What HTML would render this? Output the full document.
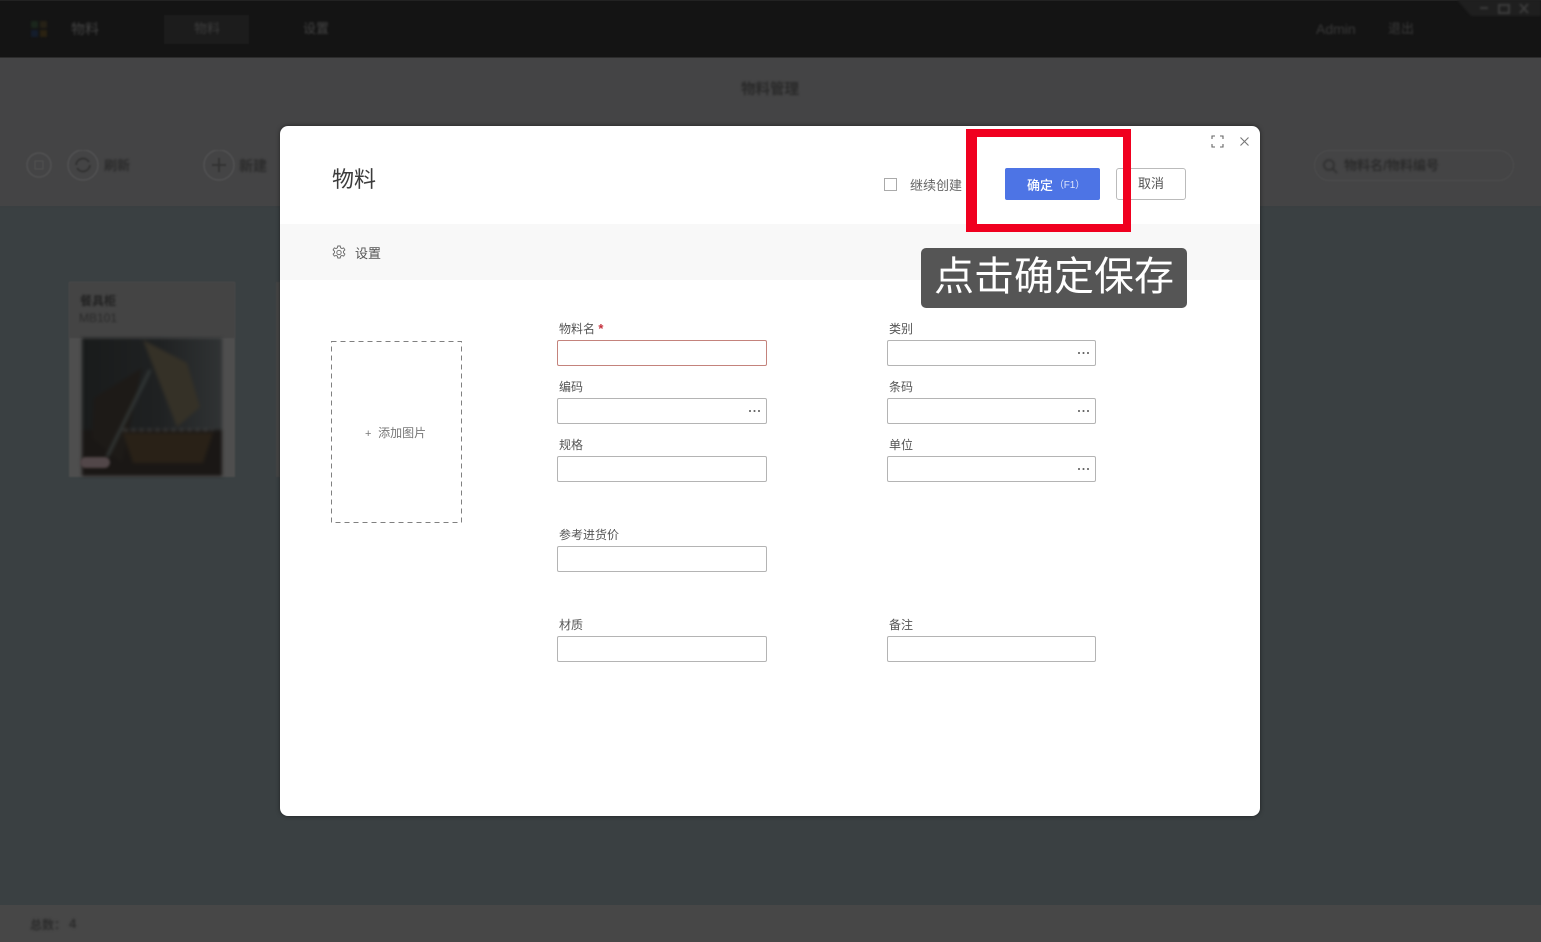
<!DOCTYPE html>
<html lang="zh"><head><meta charset="utf-8"><title>物料</title>
<style>
*{box-sizing:border-box;margin:0;padding:0}
html,body{width:1541px;height:942px;overflow:hidden;background:#3a4042;font-family:"Liberation Sans","Noto Sans CJK SC",sans-serif;color:#555}
.a{position:absolute;white-space:nowrap}
.b{filter:blur(1px)}
#bg{position:absolute;left:0;top:0;width:1541px;height:942px;overflow:hidden}
.l{font-size:12px;line-height:16px;color:#555;position:absolute;white-space:nowrap}
.i{position:absolute;width:210px;height:26px;border:1px solid #b4b4b4;border-radius:2px;background:#fff}
.d{position:absolute;right:6px;top:11px;width:11px;height:2px;background:radial-gradient(circle at 1px 1px,#666 1px,transparent 1.1px) 0 0/4.5px 2px repeat-x}
</style></head><body>
<div id="bg">
<div class="a" style="left:0;top:0;width:1541px;height:58px;background:#141414;border-bottom:1px solid #2c2c2c;border-top:1px solid #222"></div>
<div class="a" style="left:0;top:58px;width:1541px;height:150px;background:#444445"></div>
<div class="a" style="left:0;top:206px;width:1541px;height:2px;background:#3a3f41"></div>
<div class="a" style="left:0;top:905px;width:1541px;height:37px;background:#474747"></div>

<svg class="a b" style="left:30px;top:20px" width="19" height="19"><rect x="1" y="1" width="7" height="7" fill="#1a261c"/><rect x="10" y="1" width="7" height="7" fill="#262116"/><rect x="1" y="10" width="7" height="7" fill="#141d2c"/><rect x="10" y="10" width="7" height="7" fill="#2a2212"/></svg>
<div class="a b" style="left:71px;top:20px;font-size:14px;line-height:18px;color:#444">物料</div>
<div class="a" style="left:164px;top:15px;width:85px;height:29px;background:#1c1c1c;filter:blur(.6px)"></div>
<div class="a b" style="left:194px;top:20px;font-size:13px;line-height:18px;color:#3e3e3e">物料</div>
<div class="a b" style="left:303px;top:20px;font-size:13px;line-height:18px;color:#444">设置</div>
<div class="a b" style="left:1316px;top:20px;font-size:14px;line-height:18px;color:#3a3a3a">Admin</div>
<div class="a b" style="left:1388px;top:20px;font-size:13px;line-height:18px;color:#3a3a3a">退出</div>
<svg class="a b" style="left:1455px;top:0" width="86" height="18"><path d="M2 0 L16 16 H86 V0Z" fill="#1f1f1f"/><path d="M25 8H33M44 5H54V13H44ZM65 4L73 13M73 4L65 13" stroke="#3c3c3c" stroke-width="2" fill="none"/></svg>

<div class="a b" style="left:741px;top:81px;font-size:14.500px;line-height:18px;font-weight:bold;color:#2a2a2a">物料管理</div>

<svg class="a" style="left:26px;top:150px;filter:blur(.7px)" width="270" height="32" fill="none" stroke="#525253">
<circle cx="13" cy="15" r="12" stroke-width="1.500"/><rect x="9" y="11" width="8" height="8"/>
<circle cx="57" cy="15" r="15" stroke-width="1.500"/><path d="M50 15a7 7 0 0 1 13-3M64 15a7 7 0 0 1-13 3" stroke-width="2" stroke="#333"/>
<circle cx="193" cy="15" r="15" stroke-width="1.500"/><path d="M193 8v14M186 15h14" stroke-width="2" stroke="#333"/>
</svg>
<div class="a b" style="left:104px;top:157px;font-size:13px;line-height:18px;font-weight:bold;color:#2c2c2c">刷新</div>
<div class="a b" style="left:239px;top:157px;font-size:14px;line-height:18px;font-weight:bold;color:#2c2c2c">新建</div>
<div class="a" style="left:1314px;top:150px;width:200px;height:31px;border:1.500px solid #4d4d4e;border-radius:16px;filter:blur(.7px)"></div>
<svg class="a b" style="left:1322px;top:158px" width="16" height="16" fill="none" stroke="#2e2e2e" stroke-width="1.6"><circle cx="7" cy="7" r="5"/><path d="M11 11l4 4"/></svg>
<div class="a b" style="left:1344px;top:157px;font-size:13px;line-height:18px;font-weight:bold;color:#2c2c2c;letter-spacing:.05px">物料名/物料编号</div>

<div class="a" style="left:69px;top:282px;width:166px;height:195px;background:#4e4e4e;filter:blur(.8px)"></div>
<div class="a" style="left:69px;top:282px;width:166px;height:56px;background:#444;filter:blur(.8px)"></div>
<div class="a b" style="left:80px;top:294px;font-size:12px;line-height:15px;font-weight:bold;color:#222">餐具柜</div>
<div class="a b" style="left:79px;top:311px;font-size:12px;line-height:15px;color:#2a2a2a">MB101</div>
<svg class="a" style="left:82px;top:338px;filter:blur(1.8px)" width="140" height="138">
<defs><linearGradient id="g" x1="0" x2="1" y1="0" y2="0"><stop offset="0" stop-color="#191b1b"/><stop offset=".55" stop-color="#1f2122"/><stop offset="1" stop-color="#303334"/></linearGradient></defs>
<rect width="140" height="138" fill="url(#g)"/>
<rect y="92" width="140" height="46" fill="#1a1715"/>
<path d="M12 60L60 30 40 125 10 100Z" fill="#1d1a17"/>
<path d="M61 2L105 25 118 69 95 89Z" fill="#353127"/>
<path d="M41 95H131L121 125 51 125Z" fill="#292117"/>
<path d="M68 32L25 119" stroke="#373d3c" stroke-width="2.500"/>
<path d="M41 92H131" stroke="#505050" stroke-width="1.500" stroke-dasharray="5 3"/>
</svg>
<div class="a" style="left:80px;top:457px;width:30px;height:11px;border-radius:6px;background:#524749;filter:blur(1.200px)"></div>
<div class="a" style="left:276px;top:282px;width:4px;height:195px;background:#464646;filter:blur(.6px)"></div>

<div class="a b" style="left:30px;top:916px;font-size:12px;line-height:18px;color:#2c2c2c;font-weight:bold">总数：</div>
<div class="a b" style="left:69px;top:915px;font-size:13px;line-height:18px;color:#2c2c2c;font-weight:bold">4</div>
</div>

<div class="a" style="left:280px;top:126px;width:980px;height:690px;background:#fff;border-radius:8px;box-shadow:0 0 4px rgba(0,0,0,.5)">
<div class="a" style="left:0;top:98px;width:980px;height:56px;background:#f8f8f8"></div>
</div>

<div class="a" style="left:332px;top:166px;font-size:22px;line-height:28px;color:#3c3c3c">物料</div>
<svg class="a" style="left:1211px;top:135px" width="13" height="13" fill="none" stroke="#666" stroke-width="1.1"><path d="M1 4V1H4M9 1H12V4M12 9V12H9M4 12H1V9"/></svg>
<svg class="a" style="left:1239px;top:136px" width="11" height="11" fill="none" stroke="#777" stroke-width="1.1"><path d="M1.5 1.500L9.500 9.500M9.500 1.500L1.500 9.500"/></svg>

<div class="a" style="left:884px;top:178px;width:13px;height:13px;border:1px solid #aaa"></div>
<div class="a" style="left:910px;top:177px;font-size:13px;line-height:18px;color:#666">继续创建</div>
<div class="a" style="left:1005px;top:168px;width:95px;height:32px;background:#4d74e5;border-radius:2px"></div>
<div class="a" style="left:1027px;top:177px;font-size:13px;line-height:18px;color:#fff;font-weight:500">确定</div>
<div class="a" style="left:1054px;top:177px;font-size:10px;line-height:17px;color:#dfe6fb;letter-spacing:-.2px">（F1）</div>
<div class="a" style="left:1116px;top:168px;width:70px;height:32px;border:1px solid #bbb;border-radius:3px;background:#fff"></div>
<div class="a" style="left:1138px;top:175px;font-size:13px;line-height:18px;color:#555">取消</div>
<div class="a" style="left:966px;top:129px;width:165px;height:103px;border:8px solid #f0001f;border-left-width:11px;border-top-width:8px"></div>

<svg class="a" style="left:332px;top:245px" width="14" height="15" fill="none" stroke="#666" stroke-width=".9"><circle cx="7" cy="7.500" r="2.200"/><path d="M5.800 1h2.400l.4 1.800 1.300.7 1.800-.6 1.200 2-1.400 1.300v1.600l1.400 1.300-1.200 2-1.800-.6-1.300.7-.4 1.800H5.800l-.4-1.800-1.300-.7-1.800.6-1.200-2 1.400-1.300V6.200L1.100 4.900l1.200-2 1.800.6 1.300-.7z"/></svg>
<div class="a" style="left:355px;top:245px;font-size:13px;line-height:18px;color:#555">设置</div>

<div class="a" style="left:921px;top:248px;width:266px;height:60px;background:#555;border-radius:5px"></div>
<div class="a" style="left:934px;top:252px;font-size:40px;line-height:50px;color:#fff">点击确定保存</div>

<svg class="a" style="left:331px;top:341px" width="131" height="182" fill="none"><rect x=".5" y=".5" width="130" height="181" stroke="#808080" stroke-dasharray="5 4"/></svg>
<div class="a" style="left:365px;top:425px;font-size:12px;line-height:16px;color:#777"><span style="font-size:11px">+</span> &nbsp;添加图片</div>

<div class="l" style="left:559px;top:321px">物料名 <span style="color:#c4303c;font-weight:bold;font-size:13px">*</span></div>
<div class="i" style="left:557px;top:340px;border-color:#c4837c"></div>
<div class="l" style="left:559px;top:379px">编码</div>
<div class="i" style="left:557px;top:398px"><div class="d"></div></div>
<div class="l" style="left:559px;top:437px">规格</div>
<div class="i" style="left:557px;top:456px"></div>
<div class="l" style="left:559px;top:527px">参考进货价</div>
<div class="i" style="left:557px;top:546px"></div>
<div class="l" style="left:559px;top:617px">材质</div>
<div class="i" style="left:557px;top:636px"></div>

<div class="l" style="left:889px;top:321px">类别</div>
<div class="i" style="left:887px;top:340px;width:209px"><div class="d"></div></div>
<div class="l" style="left:889px;top:379px">条码</div>
<div class="i" style="left:887px;top:398px;width:209px"><div class="d"></div></div>
<div class="l" style="left:889px;top:437px">单位</div>
<div class="i" style="left:887px;top:456px;width:209px"><div class="d"></div></div>
<div class="l" style="left:889px;top:617px">备注</div>
<div class="i" style="left:887px;top:636px;width:209px"></div>
</body></html>
